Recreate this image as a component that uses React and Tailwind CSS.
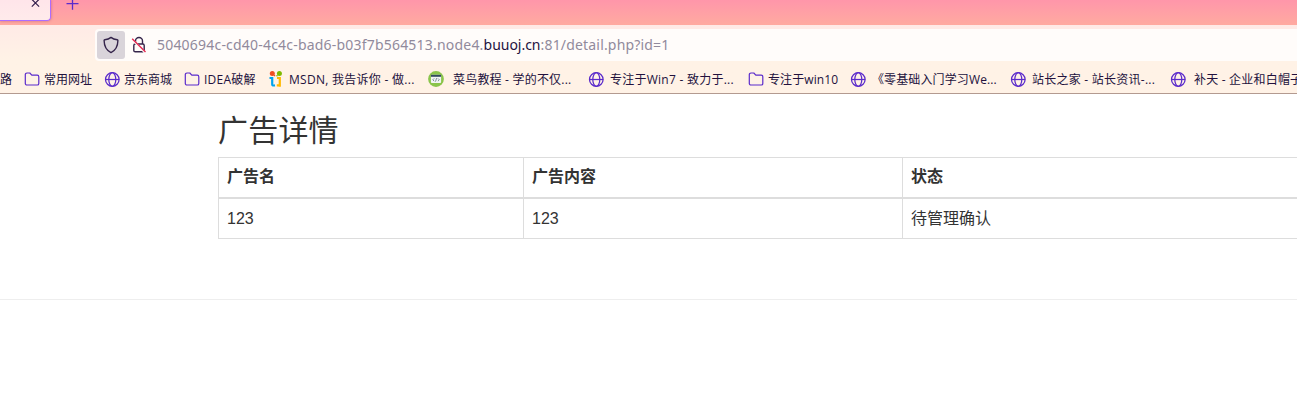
import React from "react";

const Folder = () => (
  <svg className="h-4 w-4 shrink-0" viewBox="0 0 16 16" fill="none" stroke="#5b2bcb" strokeWidth="1.2" strokeLinejoin="round">
    <path d="M1.3 2.6a1.6 1.6 0 0 1 1.6-1.6h2.9l2 2.1h5.4a1.6 1.6 0 0 1 1.6 1.6v6.7a1.6 1.6 0 0 1-1.6 1.6H2.9a1.6 1.6 0 0 1-1.6-1.6z" />
  </svg>
);

const Globe = () => (
  <svg className="h-4 w-4 shrink-0" viewBox="0 0 16 16" fill="none" stroke="#5b2bcb" strokeWidth="1.25">
    <circle cx="8.3" cy="7.5" r="6.8" />
    <ellipse cx="8.3" cy="7.5" rx="3.5" ry="6.8" />
    <path d="M1.4 7.5h13.8" />
  </svg>
);

const Msdn = () => (
  <svg className="-mt-[2px] h-4 w-4 shrink-0" viewBox="0 0 16 16" fill="none">
    <circle cx="4.3" cy="2.6" r="2.5" fill="#f04e23" />
    <circle cx="11.4" cy="2.6" r="2.5" fill="#7dba00" />
    <circle cx="6.5" cy="4.6" r=".8" fill="#f04e23" />
    <circle cx="9" cy="4.8" r=".8" fill="#7dba00" />
    <path d="M1.5 7h2.7v6.4q0 1.4 2.8 1" stroke="#00a3ee" strokeWidth="2.2" />
    <path d="M9 7h2.8v8.8M8.8 14.3h3" stroke="#ffb900" strokeWidth="2.2" />
  </svg>
);

const Runoob = () => (
  <svg className="-mt-[2px] h-4 w-4 shrink-0" viewBox="0 0 16 16" fill="none">
    <circle cx="8" cy="8" r="7.9" fill="#8ac44a" />
    <rect x="2.9" y="3.8" width="10.2" height="8.2" rx="1" fill="#f1f5f4" />
    <path d="M2.9 3.8h10.2v2H2.9z" fill="#324a5e" />
    <path d="M6.2 7.4 4.8 8.8l1.4 1.4M9.9 7.4l1.4 1.4-1.4 1.4M8.6 7.1l-1.1 3.5" stroke="#62737f" strokeWidth=".8" />
  </svg>
);

const bookmarks = [
  { icon: Folder, text: "常用网址", width: "w-[80px]", gap: "gap-1", spacing: "" },
  { icon: Globe, text: "京东商城", width: "w-[80px]", gap: "gap-1", spacing: "" },
  { icon: Folder, text: "IDEA破解", width: "w-[84px]", gap: "gap-1", spacing: "tracking-[0.25px]" },
  { icon: Msdn, text: "MSDN, 我告诉你 - 做...", width: "w-[160px]", gap: "gap-[5px]", spacing: "tracking-[0.28px]" },
  { icon: Runoob, text: "菜鸟教程 - 学的不仅...", width: "w-[160px]", gap: "gap-[9px]", spacing: "tracking-[0.2px]" },
  { icon: Globe, text: "专注于Win7 - 致力于...", width: "w-[160px]", gap: "gap-[6px]", spacing: "tracking-[0.25px]" },
  { icon: Folder, text: "专注于win10", width: "w-[102px]", gap: "gap-1", spacing: "tracking-[0.1px]" },
  { icon: Globe, text: "《零基础入门学习We...", width: "w-[160px]", gap: "gap-[6px]", spacing: "tracking-[0.12px]" },
  { icon: Globe, text: "站长之家 - 站长资讯-...", width: "w-[160px]", gap: "gap-[6px]", spacing: "tracking-[0.25px]" },
  { icon: Globe, text: "补天 - 企业和白帽子", width: "w-[170px]", gap: "gap-2", spacing: "tracking-[0.2px]" },
];

function TabStrip() {
  return (
    <div className="flex h-[25px] shrink-0 items-start bg-linear-to-b from-[#ff96aa] to-[#ffaaa0]">
      <div className="flex h-[21px] w-[51px] justify-end rounded-br-[4px] border-r-[1.5px] border-b-[1.5px] border-[#ad6cff] bg-linear-to-b from-[#ffe5ea] to-[#ffebeb] pr-[10px] shadow-[0_0_3px_rgba(120,30,80,0.4)]">
        <svg className="h-2 w-[9px]" viewBox="0 0 9 8" stroke="#35204d" strokeWidth="1.2">
          <path d="M.8-.7 8.1 6.6M8.1-.7.8 6.6" />
        </svg>
      </div>
      <svg className="ml-[15px] h-[11px] w-[13px]" viewBox="0 0 13 11" stroke="#5b2bcb" strokeWidth="1.3">
        <path d="M.5 3.7h12M6.5-2V9.8" />
      </svg>
    </div>
  );
}

function AddressBar() {
  return (
    <div className="flex h-9 shrink-0 pt-1 pl-[95px]">
      <div className="flex h-8 flex-1 items-center rounded-l-[4px] bg-[#fffcfa] pl-[2px]">
        <div className="flex h-7 w-7 items-center justify-center rounded-[3px] bg-[#d9d4da]">
          <svg className="h-[18px] w-4" viewBox="0 0 16 18" fill="none" stroke="#35254b" strokeWidth="1.4" strokeLinejoin="round">
            <path d="M8 1.4C6.2 2.8 4 3.5 1.8 3.8c-.4.1-.7.4-.7.8C1.2 10.5 3.5 14.6 8 16.6c4.5-2 6.8-6.1 6.9-12 0-.4-.3-.7-.7-.8C12 3.5 9.8 2.8 8 1.4z" />
          </svg>
        </div>
        <svg className="ml-[6px] h-[18px] w-4" viewBox="0 0 16 18" fill="none" stroke="#35254b" strokeWidth="1.4">
          <path d="M4.5 8V5a3.5 3.5 0 0 1 7 0V8" />
          <rect x="2.8" y="8" width="10.4" height="7.8" rx="1.4" />
          <path d="M1.2 3.5 14.5 17" stroke="#fffcfa" strokeWidth="2.4" />
          <path d="M1.2 2.7 14.5 16" stroke="#e22850" strokeWidth="1.4" />
        </svg>
        <span className="ml-[10px] font-['Noto_Sans',sans-serif] text-[14px] leading-5 tracking-[0.2px] whitespace-nowrap text-[#918a9c]">
          5040694c-cd40-4c4c-bad6-b03f7b564513.node4.
          <span className="tracking-[-0.02px] text-[#23123f]">buuoj.cn</span>
          <span className="tracking-[0.18px]">:81/detail.php?id=1</span>
        </span>
      </div>
    </div>
  );
}

function BookmarksBar() {
  return (
    <div className="flex h-8 shrink-0 items-center overflow-hidden pt-[6px] font-['Open_Sans','Noto_Sans_CJK_SC',sans-serif] text-[12px] leading-4 whitespace-nowrap text-[#22113d]">
      <span className="w-6 shrink-0">路</span>
      {bookmarks.map(({ icon: Icon, text, width, gap, spacing }) => (
        <div key={text} className={`flex shrink-0 items-center ${width} ${gap}`}>
          <Icon />
          <span className={spacing}>{text}</span>
        </div>
      ))}
    </div>
  );
}

export default function App() {
  return (
    <div className="flex h-[411px] w-[1297px] flex-col overflow-hidden bg-white">
      <TabStrip />
      <div className="flex h-[69px] shrink-0 flex-col border-b border-[#b39a90] bg-linear-to-b from-[#ffeae6] to-[#fff2e6] to-50%">
        <AddressBar />
        <BookmarksBar />
      </div>
      <main className="font-['Liberation_Sans','Noto_Sans_CJK_SC',sans-serif] text-[16px] leading-6 text-[#333]">
        <h3 className="mt-[20px] ml-[218px] h-[43px] text-[30px] leading-[33px] tracking-[0.2px]">广告详情</h3>
        <table className="ml-[218px] w-[1140px] table-fixed border-collapse border border-[#ddd] text-left">
          <thead>
            <tr className="h-[40px]">
              <th className="w-[305px] border border-b-2 border-[#ddd] px-2 py-0 pb-px">广告名</th>
              <th className="w-[379px] border border-b-2 border-[#ddd] px-2 py-0 pb-px">广告内容</th>
              <th className="border border-b-2 border-[#ddd] px-2 py-0 pb-px">状态</th>
            </tr>
          </thead>
          <tbody>
            <tr className="h-[41px]">
              <td className="border border-[#ddd] px-2 pt-[2px] pb-0">123</td>
              <td className="border border-[#ddd] px-2 pt-[2px] pb-0">123</td>
              <td className="border border-[#ddd] px-2 pt-[2px] pb-0">待管理确认</td>
            </tr>
          </tbody>
        </table>
        <hr className="mt-[60px] border-[#eee]" />
      </main>
    </div>
  );
}
